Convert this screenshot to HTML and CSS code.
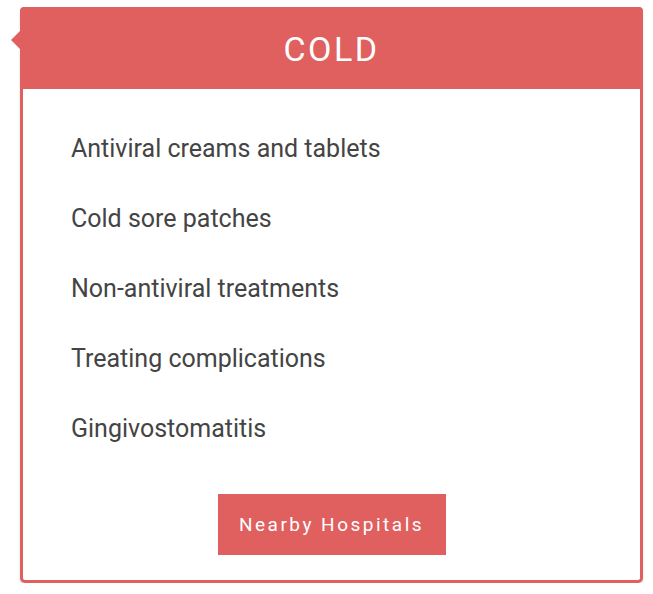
FILE: index.html
```html
<!DOCTYPE html>
<html>
<head>
<meta charset="utf-8">
<link rel="stylesheet" href="styles.css">
</head>
<body>
<div class="card">
  <div class="card-header">
    <h1 class="card-title">COLD</h1>
  </div>
  <ul class="card-list">
    <li>Antiviral creams and tablets</li>
    <li>Cold sore patches</li>
    <li>Non-antiviral treatments</li>
    <li>Treating complications</li>
    <li>Gingivostomatitis</li>
  </ul>
  <div class="card-actions">
    <a class="btn" href="#">Nearby Hospitals</a>
  </div>
</div>
</body>
</html>
```

FILE: styles.css
```css
html, body {
  margin: 0;
  padding: 0;
  background: #ffffff;
}
body {
  padding: 7px 10px 0 20px;
  font-family: Roboto, "Liberation Sans", sans-serif;
}
.card {
  width: 617px;
  border: 3px solid #e05f5f;
  border-radius: 5px;
  box-shadow: 0 3px 3px rgba(0, 0, 0, 0.12);
  background: #fff;
}
.card-header {
  position: relative;
  height: 79px;
  background: #e05f5f;
  display: flex;
  align-items: center;
  justify-content: center;
  margin: -3px -3px 0;
  padding: 3px 3px 0;
  border-radius: 4px 4px 0 0;
}
.card-header::before {
  content: "";
  position: absolute;
  left: -9px;
  top: 24px;
  width: 0;
  height: 0;
  border-top: 9px solid transparent;
  border-bottom: 9px solid transparent;
  border-right: 9px solid #e05f5f;
}
.card-title {
  margin: 0 0 2px;
  color: #fff;
  font-size: 34px;
  font-weight: 400;
  letter-spacing: 2.5px;
  line-height: 1;
}
.card-list {
  list-style: none;
  margin: 0;
  padding: 25px 0 0 48px;
}
.card-list li {
  height: 70px;
  line-height: 70px;
  font-size: 25px;
  color: #444444;
}
.card-actions {
  display: flex;
  justify-content: center;
  padding: 30px 0 25px;
}
.btn {
  display: flex;
  align-items: center;
  justify-content: center;
  width: 228px;
  height: 61px;
  background: #e05f5f;
  color: #fff;
  text-decoration: none;
  font-size: 19px;
  letter-spacing: 2.5px;
}
```
